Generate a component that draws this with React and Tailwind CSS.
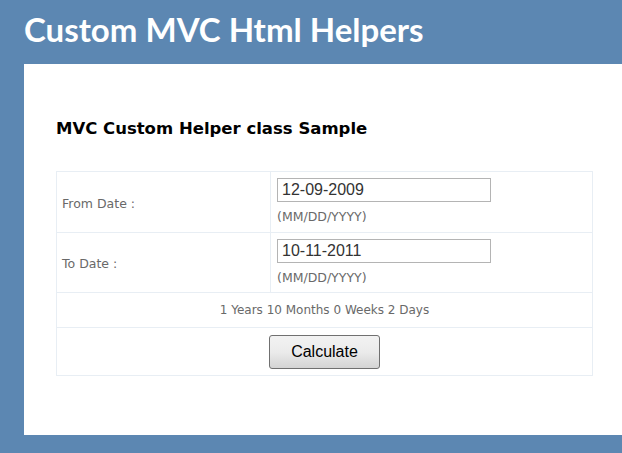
import React, { useState } from 'react';

export default function App() {
  const [fromDate, setFromDate] = useState('12-09-2009');
  const [toDate, setToDate] = useState('10-11-2011');

  return (
    <div className="min-h-[453px] bg-[#5c87b2] overflow-hidden" style={{ fontFamily: '"DejaVu Sans", Verdana, sans-serif' }}>
      {/* Header */}
      <div className="h-[64px] pl-[24px] pt-[9px]">
        <h1 className="text-[33px] leading-[40px] font-bold text-white font-['Lato',sans-serif]">
          Custom MVC Html Helpers
        </h1>
      </div>

      {/* Main */}
      <div className="ml-[24px] bg-white h-[371px] pt-[54px] pl-[32px] pr-[29px]">
        <h2 className="text-[16.5px] leading-[22px] font-bold text-black mb-[31px]">
          MVC Custom Helper class Sample
        </h2>

        <table className="w-[537px] border-collapse text-[12px] text-[#696969]">
          <tbody>
            <tr className="h-[61px]">
              <td className="w-[214px] border border-[#e8eef4] px-[5px] pt-[4px] text-[12.5px]">From Date :</td>
              <td className="border border-[#e8eef4] px-[6px] align-top pt-[6px]">
                <input
                  value={fromDate}
                  onChange={(e) => setFromDate(e.target.value)}
                  className="block w-[214px] h-[24px] border border-[#b4b4b4] px-[4px] text-[16px] text-[#333] font-['Liberation_Sans',Arial,sans-serif] outline-none"
                />
                <div className="mt-[7px] leading-[16px] text-[12.5px]">(MM/DD/YYYY)</div>
              </td>
            </tr>
            <tr className="h-[60px]">
              <td className="border border-[#e8eef4] px-[5px] pt-[4px] text-[12.5px]">To Date :</td>
              <td className="border border-[#e8eef4] px-[6px] align-top pt-[6px]">
                <input
                  value={toDate}
                  onChange={(e) => setToDate(e.target.value)}
                  className="block w-[214px] h-[24px] border border-[#b4b4b4] px-[4px] text-[16px] text-[#333] font-['Liberation_Sans',Arial,sans-serif] outline-none"
                />
                <div className="mt-[7px] leading-[16px] text-[12.5px]">(MM/DD/YYYY)</div>
              </td>
            </tr>
            <tr className="h-[35px]">
              <td colSpan={2} className="border border-[#e8eef4] text-center">
                1 Years 10 Months 0 Weeks 2 Days
              </td>
            </tr>
            <tr className="h-[48px]">
              <td colSpan={2} className="border border-[#e8eef4] text-center">
                <button className="w-[111px] h-[34px] rounded-[3px] border border-[#707070] bg-gradient-to-b from-[#f2f2f2] via-[#ebebeb] to-[#d4d4d4] text-[16px] text-black font-['Liberation_Sans',Arial,sans-serif]">
                  Calculate
                </button>
              </td>
            </tr>
          </tbody>
        </table>
      </div>
    </div>
  );
}
